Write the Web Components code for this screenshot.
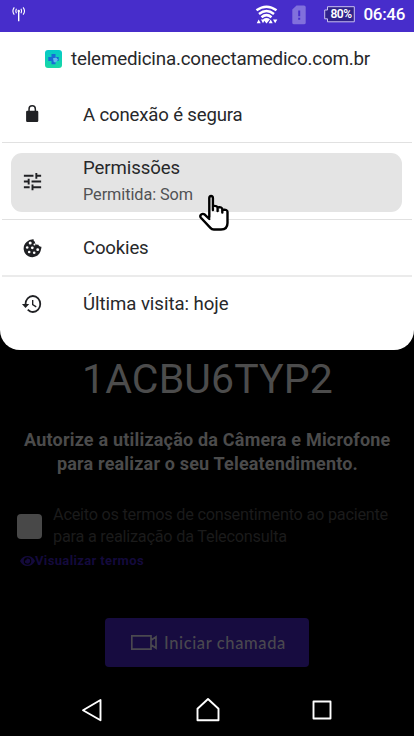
<!DOCTYPE html>
<html lang="pt-BR"><head><meta charset="utf-8"><title>Teleatendimento</title>
<style>html,body{margin:0;background:#000;height:100%}body{font-family:Roboto,"Liberation Sans",sans-serif;overflow:hidden}</style></head>
<body><phone-screen></phone-screen>
<script>
const define=(name,html,ready)=>{
  const t=document.createElement('template');t.innerHTML=html;
  customElements.define(name,class extends HTMLElement{
    constructor(){super();this.attachShadow({mode:'open'}).append(t.content.cloneNode(true));}
    connectedCallback(){if(ready)ready(this);}
  });
};

// One line of text, tracked so that it takes the width given in its attribute.
define('fit-text',`<style>:host{display:block;white-space:nowrap;width:max-content}span{display:inline-block}</style><span><slot></slot></span>`,el=>{
  const s=el.shadowRoot.querySelector('span');
  const w=+el.getAttribute('width');
  const n=[...el.textContent].length;
  s.style.letterSpacing=((w-s.getBoundingClientRect().width)/n)+'px';
});

define('status-bar',`<style>
:host{display:flex;box-sizing:border-box;height:32px;background:#472dcb;align-items:center;padding:0 9px 0 12px;color:#fff}
svg{display:block;flex:none}.gap{flex:1}
.bat{display:flex;position:relative;width:31px;height:17px;margin-left:18px}
.bat svg{position:absolute;inset:0}
.bat fit-text{position:absolute;left:7px;top:1px;font-weight:600;font-size:12px;line-height:15px}
.time{font-size:17px;line-height:20px;margin:-4px 0 0 9px;font-weight:500}
.sig{margin-top:-5px}.wifi{margin-top:-2px}.sim{margin:-3px 0 0 13px}.bat{margin-top:-4px}
</style>
<svg class="sig" width="14" height="16" viewBox="0 0 14 16" fill="none" stroke="#fff" stroke-width="1.1"><path d="M6.7 5v10.3" stroke-width="1.4"/><circle cx="6.7" cy="5" r="1.2" fill="#fff" stroke="none"/><path d="M4.500 2.800Q3.200 5 4.500 7.200M8.900 2.800q1.300 2.200 0 4.400M2.300 1.300Q-.5 5 2.300 8.700M11.100 1.300q2.800 3.700 0 7.400"/></svg>
<div class="gap"></div>
<svg class="wifi" width="24" height="20" viewBox="0 0 24 20" fill="none" stroke="#fff" stroke-width="2.500"><path d="M1.500 5.300q10-7.200 20 0M4 8.900q7.500-5.800 15 0M6.500 12.200q5-4.200 10 0"/><path d="M8 14.300q3.500-2.600 7 0l-3.500 4.200z" fill="#fff" stroke="none"/><path d="M1.700 18.300l2-3.800 2 3.800zM6 14.500h4l-2 3.800zM13.700 18.300l2-3.800 2 3.800zM18 14.500h4.300l-2.100 3.800z" fill="#fff" stroke="none"/></svg>
<svg class="sim" width="14" height="20" viewBox="0 0 14 20"><path d="M4.500.5H12Q13.700.5 13.700 2v15.700q0 1.600-1.700 1.600H2q-1.700 0-1.700-1.600V4.600z" fill="#8170dc"/><path d="M6.200 5.500h2v5.700h-2zm0 7.200h2v2h-2z" fill="#472dcb"/></svg>
<div class="bat"><svg width="31" height="17"><path d="M3.500.7h26.800v15.100H3.500v-3H.7V4h2.800z" fill="#30228b" stroke="#c9c1f0"/></svg><fit-text width="21">80%</fit-text></div>
<fit-text class="time" width="41.500">06:46</fit-text>`);

define('site-header',`<style>:host{display:flex;height:54px;box-sizing:border-box;padding-left:45px;align-items:center}
svg{display:block;margin-right:9px}fit-text{font-size:18.800px;line-height:24px;color:#27282a}</style>
<svg width="17" height="18" viewBox="0 0 17 18"><defs><linearGradient id="g" x2="0" y2="1"><stop stop-color="#05c9ca"/><stop offset="1" stop-color="#18d8a4"/></linearGradient></defs><rect width="17" height="18" rx="3" fill="url(#g)"/><path d="M6.500 4h4v3H13.700v4h-3.200v3.300h-4V11H3.300V7h3.200z" fill="#176bd4"/><path d="M8 8.300l3.200-.8 1.800 2.300-2 2.500H8.800z" fill="#62b9ee"/></svg>
<slot></slot>`);

define('info-row',`<style>
:host{display:flex;box-sizing:border-box;padding-left:21px;align-items:center;color:#27282a;font-size:18.600px;line-height:22px}
.icon{width:24px;height:24px;margin-right:38px;flex:none}
:host([active]){background:#e4e4e4;border-radius:11px;margin:0 12px 0 11px;padding-left:10px}
.text{display:flex;flex-direction:column}</style><div class="icon"><slot name="icon"></slot></div><div class="text"><slot></slot></div>`);

define('info-sheet',`<style>
:host{display:block;box-sizing:border-box;height:318px;background:#fff;border-radius:0 0 20px 20px;position:relative}
hr{height:1px;margin:0 2px;border:0;background:#e1e1e1}hr.soft{height:2px;background:#ebebeb}
svg{display:block;fill:#202124}
.url{font-size:18.800px;line-height:24px;color:#27282a}
.r1{height:56px}.r2{height:59px}.r2 svg{margin-top:-1px}.r3{height:55px}.r4{height:55px}
.r1 fit-text{padding-top:1px}.r4 svg{margin-top:-1px}.r4 fit-text{padding-bottom:2px}
.top{margin-bottom:10px}.bottom{margin-top:7px}
.sub{font-size:16.300px;line-height:20px;margin:6px 0 4px;color:#515254}
.hand{position:absolute;left:198px;top:161px}
</style>
<site-header><fit-text class="url" width="299">telemedicina.conectamedico.com.br</fit-text></site-header>
<info-row class="r1"><svg slot="icon" width="22" height="24" viewBox="0 0 22 24"><path d="M17.300 9.900v8.900q0 1.200-1.200 1.200H6.300q-1.200 0-1.200-1.200V9.900q0-1.200 1.200-1.200h1V7a3.900 3.900 0 0 1 7.800 0v1.700h1q1.200 0 1.200 1.200zM8.800 8.700h4.800V7a2.400 2.400 0 0 0-4.800 0z"/></svg><fit-text width="159.500">A conexão é segura</fit-text></info-row>
<hr class="top">
<info-row class="r2" active><svg slot="icon" width="23" height="23" viewBox="0 0 24 24"><path d="M3 17v2h6v-2H3zM3 5v2h10V5H3zm10 16v-2h8v-2h-8v-2h-2v6h2zM7 9v2H3v2h4v2h2V9H7zm14 4v-2H11v2h10zm-6-4h2V7h4V5h-4V3h-2v6z"/></svg><fit-text class="main" width="97">Permissões</fit-text><fit-text class="sub" width="110">Permitida: Som</fit-text></info-row>
<hr class="bottom">
<info-row class="r3"><svg slot="icon" width="24" height="24" viewBox="0 0 24 24"><path d="M12 3.300q-3.900 0-6.400 2.600A8.700 8.700 0 1 0 20 13.300q.5-1.300.4-2.600-2.500.4-3.300-2.100-3.200.5-3.200-2.900-1.700-.8-1.200-2.400z"/><g fill="#fff"><circle cx="9.200" cy="7.100" r="1.500"/><circle cx="6.200" cy="11.500" r="1.300"/><circle cx="11.300" cy="11.800" r="1.400"/><circle cx="16.700" cy="13.700" r="1.400"/><circle cx="8.200" cy="16" r="1.300"/><circle cx="13.200" cy="16.800" r="1.300"/><circle cx="13.500" cy="8.500" r="1"/></g></svg><fit-text width="65.500">Cookies</fit-text></info-row>
<hr class="soft">
<info-row class="r4"><svg slot="icon" width="22" height="24" viewBox="0 0 24 24" preserveAspectRatio="none"><path d="M13 3a9 9 0 0 0-9 9H1l3.890 3.890.07.14L9 12H6c0-3.870 3.130-7 7-7s7 3.130 7 7-3.130 7-7 7c-1.930 0-3.680-.79-4.940-2.060l-1.420 1.420A8.954 8.954 0 0 0 13 21a9 9 0 0 0 0-18zm-1 5v5l4.280 2.540.72-1.210-3.500-2.080V8H12z"/></svg><fit-text width="145.500">Última visita: hoje</fit-text></info-row>
<svg class="hand" width="34" height="40" viewBox="0 0 34 40"><path d="M11.300 24V5q0-2 1.800-2T14.900 5v11M14.900 17v-4q4.700-.5 4.700 2v3M19.600 14.500q4.700-1 4.700 2v3M24.300 17q5.200-1 5.200 2V30q0 6.500-6.500 6.500h-7.200q-2 0-3.400-1.600L2.900 24.800Q1.500 22.800 3.300 21.400q1.700-1.200 3.700.4l4.300 4.200" style="fill:#fff;stroke:#000;stroke-width:2.400;stroke-linejoin:round;stroke-linecap:round"/></svg>`);

define('call-button',`<style>:host{display:flex;box-sizing:border-box;width:204px;height:49px;margin:0 0 0 105px;border-radius:4px;background:#170c40;align-items:center;padding-left:26px;color:#4a484f;font:500 16.500px/22px Lato,sans-serif}svg{display:block;margin-right:7px}</style>
<svg width="26" height="15" fill="none" stroke="#4a484f" stroke-width="1.700"><path d="M.8.8h19.200v13.400H.8zM20 5.300l5-3.500v11.400l-5-3.500"/></svg><slot></slot>`);

define('call-page',`<style>
:host{display:flex;flex-direction:column;height:334px;color:#4b4b4b}
.code{font-size:41px;line-height:48px;margin:5px 0 0 82px;color:#4c4c4c}
.b{font-weight:700;font-size:18px;line-height:24px;margin-left:24px}.b1{margin-top:25px}.b2{margin-left:57px}
.terms{display:flex;color:#1b1b1b;font-size:16.300px;line-height:22px;padding-left:17px;margin-top:28px;align-items:center}
.box{width:25px;height:25px;border-radius:4px;background:#484848;margin:1px 11px 0 0}
.view{display:flex;align-items:center;margin:4px 0 0 20px;color:#140a3c;font-size:13px;line-height:18px;font-weight:700}
svg{display:block}call-button{margin-top:48px}
</style>
<fit-text class="code" width="251">1ACBU6TYP2</fit-text>
<fit-text class="b b1" width="366.500">Autorize a utilização da Câmera e Microfone</fit-text>
<fit-text class="b b2" width="301">para realizar o seu Teleatendimento.</fit-text>
<div class="terms"><div class="box"></div><div><fit-text width="335">Aceito os termos de consentimento ao paciente</fit-text><fit-text width="234">para a realização da Teleconsulta</fit-text></div></div>
<div class="view"><svg width="15" height="12" viewBox="0 0 15 12"><path fill="#140a3c" fill-rule="evenodd" d="M0 6Q2.500 1 7.500 1T15 6q-2.500 5-7.500 5T0 6zM7.500 2.200a3.800 3.800 0 1 0 0 7.600 3.800 3.800 0 0 0 0-7.600zM7.500 3.400a2.600 2.600 0 1 1-2.500 2q1.700.6 1.800-1.900z"/></svg><fit-text width="109">Visualizar termos</fit-text></div>
<call-button><fit-text width="122">Iniciar chamada</fit-text></call-button>`);

define('nav-bar',`<style>:host{display:flex;height:52px;align-items:center;justify-content:space-between;padding:0 82px 0 81px}svg{display:block;fill:none;stroke:#fff;stroke-width:1.900;stroke-linejoin:round}</style>
<svg width="22" height="24"><path d="M2 12.200L19.500 2v20.300z"/></svg><svg width="24" height="24"><path d="M1.500 22.300V10.700L12 1l10.500 9.700v11.600z"/></svg><svg width="20" height="20"><path d="M1.500 1.500h17v17h-17z"/></svg>`);

define('phone-screen',`<style>:host{display:flex;flex-direction:column;width:414px;height:736px;background:#000}</style><status-bar></status-bar><info-sheet></info-sheet><call-page></call-page><nav-bar></nav-bar>`);
</script></body></html>
